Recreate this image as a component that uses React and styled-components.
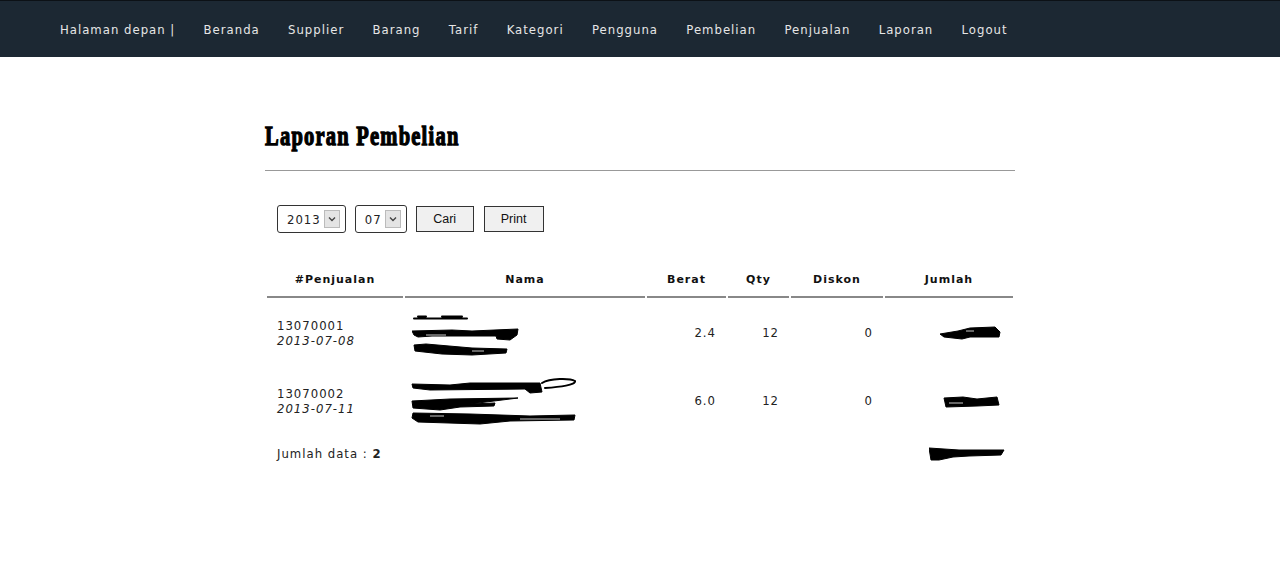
import React from "react";
import styled, { createGlobalStyle } from "styled-components";

const Global = createGlobalStyle`
  html, body { margin: 0; padding: 0; background: #fff; }
  body { font-family: "DejaVu Sans", Verdana, sans-serif; font-size: 11.7px; letter-spacing: 1px; color: #222; }
`;

const Nav = styled.nav`
  box-sizing: border-box;
  height: 57px;
  padding: 2px 0 0 60px;
  background: #1c2833;
  border-top: 1px solid #0c1116;
  display: flex;
  align-items: center;
  gap: 28.3px;
  color: #e6e6e6;
`;
const NavLink = styled.a`
  color: inherit;
  white-space: nowrap;
`;
const Main = styled.main`
  width: 750px;
  margin: 0 auto;
  padding-top: 65px;
`;
const Title = styled.h1`
  margin: 0;
  height: 48px;
  font-family: "Liberation Serif", serif;
  font-weight: 700;
  font-size: 27px;
  line-height: 28px;
  letter-spacing: 1.6px;
  color: #000;
  -webkit-text-stroke: 1.3px #000;
  transform: scaleX(0.76);
  transform-origin: left center;
  white-space: nowrap;
`;
const Rule = styled.hr`
  margin: 0;
  border: 0;
  height: 1px;
  background: #999;
`;
const Filter = styled.form`
  display: flex;
  align-items: center;
  padding: 34px 0 0 12px;
  height: 28px;
`;
const Select = styled.div`
  box-sizing: border-box;
  height: 28px;
  display: flex;
  align-items: center;
  gap: 3px;
  padding: 0 5px 0 9px;
  margin-right: ${(p) => p.$mr}px;
  border: 1px solid #333;
  border-radius: 3px;
  color: #222;
`;
const SelectValue = styled.span`
  padding-top: 2px;
`;
const Arrow = styled.span`
  width: 16px;
  height: 18px;
  box-sizing: border-box;
  background: #e4e4e4;
  border: 1px solid #bbb;
  display: flex;
  align-items: center;
  justify-content: center;
`;
const Button = styled.button`
  box-sizing: border-box;
  width: ${(p) => p.$w}px;
  height: 26px;
  margin-right: 10px;
  padding: 0;
  background: #f0f0f0;
  border: 1px solid #333;
  font-family: "Liberation Sans", Arial, sans-serif;
  font-size: 12.5px;
  letter-spacing: 0;
  color: #111;
`;
const Table = styled.table`
  margin-top: 29px;
  width: 750px;
  table-layout: fixed;
  border-collapse: separate;
  border-spacing: 2px 0;
`;
const Head = styled.th`
  height: 34px;
  padding: 0;
  border-bottom: 2px solid #888;
  font-size: 11px;
  font-weight: 700;
  color: #111;
  text-align: center;
  width: ${(p) => p.$w}px;
`;
const Cell = styled.td`
  height: 68px;
  padding: ${(p) => (p.$ink ? "2px" : "3px")} 10px 0;
  box-sizing: border-box;
  text-align: ${(p) => (p.$right ? "right" : "left")};
  vertical-align: middle;
  line-height: 15px;
`;
const FootCell = styled(Cell)`
  height: 38px;
  padding-top: ${(p) => (p.$ink ? "0" : "2px")};
`;
const Scribble = styled.svg`
  display: block;
  margin-left: ${(p) => p.$ml || 0}px;
`;
const Em = styled.em`
  display: block;
`;

const Ink = ({ w, h, ml, d, lines, streaks }) => (
  <Scribble width={w} height={h} viewBox={`0 0 ${w} ${h}`} $ml={ml}>
    <path d={d} fill="#000" stroke="#000" strokeWidth="1" strokeLinejoin="round" />
    {lines && <path d={lines} fill="none" stroke="#000" strokeWidth="2" strokeLinecap="round" />}
    {streaks && <path d={streaks} fill="none" stroke="#fff" strokeWidth="0.8" />}
  </Scribble>
);

const Chevron = () => (
  <Arrow>
    <svg width="8" height="6" viewBox="0 0 8 6">
      <path d="M1 1.5 L4 4.5 L7 1.5" fill="none" stroke="#444" strokeWidth="1.4" />
    </svg>
  </Arrow>
);

const menu = ["Beranda", "Supplier", "Barang", "Tarif", "Kategori", "Pengguna", "Pembelian", "Penjualan", "Laporan", "Logout"];
const cols = [["#Penjualan", 136], ["Nama", 240], ["Berat", 79], ["Qty", 61], ["Diskon", 92], ["Jumlah", 128]];

export default function App() {
  return (
    <>
      <Global />
      <Nav>
        <NavLink>Halaman depan |</NavLink>
        {menu.map((m) => (
          <NavLink key={m}>{m}</NavLink>
        ))}
      </Nav>
      <Main>
        <Title>Laporan Pembelian</Title>
        <Rule />
        <Filter>
          <Select $mr={9}><SelectValue>2013</SelectValue><Chevron /></Select>
          <Select $mr={9}><SelectValue>07</SelectValue><Chevron /></Select>
          <Button type="button" $w={58}>Cari</Button>
          <Button type="button" $w={60}>Print</Button>
        </Filter>
        <Table>
          <thead>
            <tr>
              {cols.map(([c, w]) => (
                <Head key={c} $w={w}>{c}</Head>
              ))}
            </tr>
          </thead>
          <tbody>
            <tr>
              <Cell>13070001<Em>2013-07-08</Em></Cell>
              <Cell $ink>
                <Ink
                  w={110}
                  h={48}
                  ml={-3}
                  d="M0 22 L40 21 L60 22 L106 20 L105 26 L98 31 L85 30 L84 27 L20 27 L6 28 L2 26 Z M2 36 L14 35 L60 39 L95 40 L94 44 L60 46 L30 45 L3 42 Z"
                  lines="M2 9.5 L55 9.5 M6 7.5 L14 7.5 M30 7.5 L50 7.5"
                  streaks="M14 26 L34 26 M60 42 L72 42"
                />
              </Cell>
              <Cell $right>2.4</Cell>
              <Cell $right>12</Cell>
              <Cell $right>0</Cell>
              <Cell $right $ink>
                <Ink w={62} h={14} ml={45} d="M0 8 L18 5 L30 2 L55 1 L60 6 L59 11 L30 11 L22 13 L4 11Z" streaks="M26 5 L34 5" />
              </Cell>
            </tr>
            <tr>
              <Cell>13070002<Em>2013-07-11</Em></Cell>
              <Cell $ink>
                <Ink
                  w={168}
                  h={50}
                  ml={-5}
                  d="M2 8 L40 9 L60 7 L130 7 L132 16 L120 17 L115 13 L20 14 L3 12Z M2 25 L40 23 L108 22 L60 28 L85 27 L84 30 L50 31 L30 34 L3 32Z M3 37 L60 38 L120 40 L165 39 L164 44 L100 45 L70 48 L8 46 L2 42Z"
                  lines="M132 7 C140 2 160 2 165 5 C166 9 150 11 135 12"
                  streaks="M20 40 L34 40 M110 43 L150 43"
                />
              </Cell>
              <Cell $right>6.0</Cell>
              <Cell $right>12</Cell>
              <Cell $right>0</Cell>
              <Cell $right $ink>
                <Ink w={58} h={14} ml={48} d="M1 4 L20 3 L34 5 L54 3 L56 11 L34 12 L3 13Z" streaks="M6 9 L20 9" />
              </Cell>
            </tr>
            <tr>
              <FootCell colSpan={5}>Jumlah data : <b>2</b></FootCell>
              <FootCell $right $ink>
                <Ink w={78} h={16} ml={34} d="M0 3 L30 5 L75 5 L72 10 L40 11 L24 12 L10 15 L2 15Z" />
              </FootCell>
            </tr>
          </tbody>
        </Table>
      </Main>
    </>
  );
}
